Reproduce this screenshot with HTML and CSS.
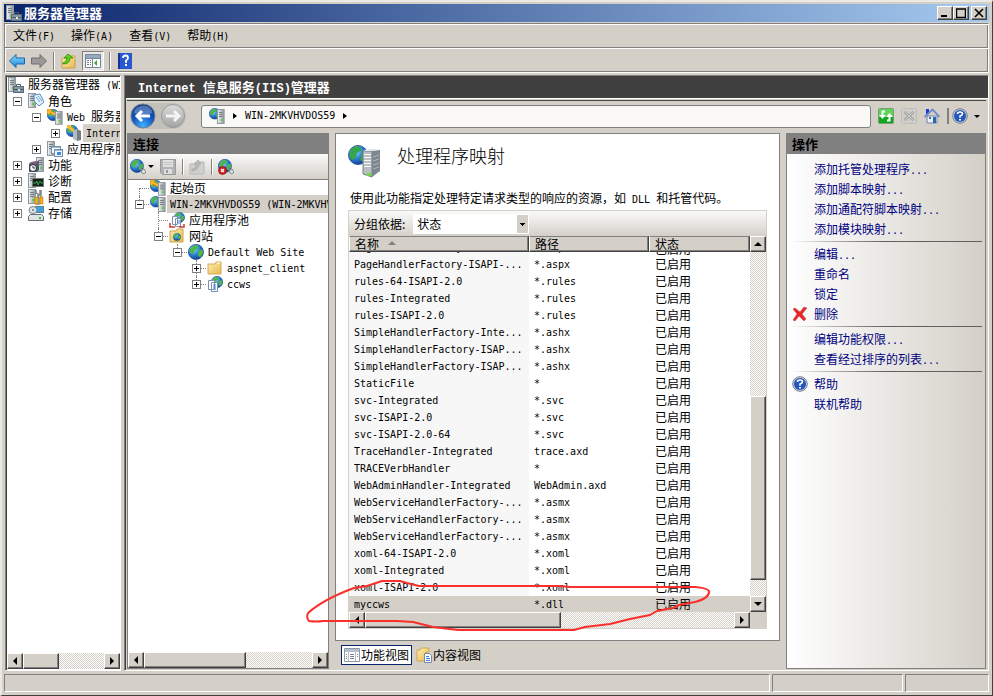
FILE: index.html
```html
<!DOCTYPE html>
<html lang="zh-CN">
<head>
<meta charset="utf-8">
<title>服务器管理器</title>
<link rel="stylesheet" href="styles.css">
</head>
<body>
<svg class="defs" aria-hidden="true">
<defs>
<linearGradient id="gTower" x1="0" x2="1"><stop offset="0" stop-color="#f4f6f7"/><stop offset="1" stop-color="#8d979d"/></linearGradient>
<radialGradient id="gGlobe" cx=".35" cy=".3" r=".8"><stop offset="0" stop-color="#a8dcff"/><stop offset=".5" stop-color="#2b7fd6"/><stop offset="1" stop-color="#0b2f86"/></radialGradient>
<linearGradient id="gFolder" x1="0" y1="0" x2="1" y2="1"><stop offset="0" stop-color="#fff0b4"/><stop offset="1" stop-color="#e6b84c"/></linearGradient>
<radialGradient id="gBlue" cx=".5" cy=".9" r=".9"><stop offset="0" stop-color="#3fb2ff"/><stop offset=".5" stop-color="#1559c4"/><stop offset="1" stop-color="#08307f"/></radialGradient>
<linearGradient id="gGray" x1="0" y1="0" x2="0" y2="1"><stop offset="0" stop-color="#dadada"/><stop offset="1" stop-color="#a4a4a4"/></linearGradient>
<linearGradient id="gArrow" x1="0" y1="0" x2="0" y2="1"><stop offset="0" stop-color="#8fdcff"/><stop offset="1" stop-color="#1b86d8"/></linearGradient>
<g id="tower"><rect x=".5" y=".5" width="7" height="14" fill="url(#gTower)" stroke="#8e989d"/><path d="M2 3.5h4M2 5.5h4M2 7.5h4" stroke="#727d83"/><rect x="4" y="10" width="2" height="2" fill="#4fd32e"/></g>
<g id="ball"><circle cx="6" cy="6" r="5.7" fill="url(#gGlobe)" stroke="#1d4f96" stroke-width=".6"/><path d="M2 3Q4 .6 7 1L8 3 5 5 4 8 2 7 1 5ZM8 5l3-1 .4 3-2 3-2-1Z" fill="#4cb648"/></g>
</defs>
<symbol id="server" viewBox="0 0 16 16"><use href="#tower"/><rect x="5.500" y="9.500" width="10" height="6" fill="#8297a5" stroke="#5c6b76"/><path d="M8.500 9V7.500h4V9M6 12.500h9" fill="none" stroke="#4a5963"/><path d="M10 12h2v2h-2z" fill="#e6e6e6"/></symbol>
<symbol id="role" viewBox="0 0 16 16"><use href="#tower"/><path d="M6 2l6-1 4 8-5 4-5-5Z" fill="#e3f1fc" stroke="#5b87b5"/><path d="M8 4l4 5M10 3l4 5" stroke="#6ea4da"/></symbol>
<symbol id="web" viewBox="0 0 16 16"><use href="#ball"/><path d="M0 4V0h5L4 2l5 2-1 3-5-3-1 2Z" fill="#ffb92e" stroke="#c97a0a" stroke-width=".6"/><g transform="translate(8 2) scale(.95 .92)"><use href="#tower"/></g></symbol>
<symbol id="globesrv" viewBox="0 0 16 16"><g transform="scale(.95)"><use href="#ball"/></g><g transform="translate(8 1) scale(.95 1)"><use href="#tower"/></g></symbol>
<symbol id="iis" viewBox="0 0 16 16"><use href="#ball"/><path d="M1 3V0h4v2l4 3-2 2-4-3Z" fill="#ffb92e"/><path d="M7 6l4-2v12l-4-2Z" fill="#b4bcc0"/><path d="M11 4l4 2v9l-4 1Z" fill="#727d84"/></symbol>
<symbol id="apps" viewBox="0 0 16 16"><use href="#tower"/><rect x="4.500" y="5.500" width="9" height="7" fill="#f2f7fc" stroke="#768ca3"/><rect x="7.500" y="8.500" width="8" height="7" fill="#eef6ff" stroke="#768ca3"/><path d="M5 6h8v1H5zM8 9h7v1H8z" fill="#9bbbe0"/><path d="M10 11h4v3h-4z" fill="#3b88de"/></symbol>
<symbol id="feature" viewBox="0 0 16 16"><g transform="translate(8 0)"><use href="#tower"/></g><path d="M3 5l8-1v9l-2 2H1V7Z" fill="#4c5a70"/><path d="M4 5l7-1-2 3H1Z" fill="#7b5a78"/><circle cx="5" cy="11" r="3.500" fill="#f4f4f4" stroke="#20272d"/><path d="M5 9v2h2" fill="none" stroke="#333"/></symbol>
<symbol id="diag" viewBox="0 0 16 16"><use href="#tower"/><rect x="4.500" y="5.500" width="11" height="8" fill="#14241a" stroke="#777"/><path d="M5 10h3l1-2 1 4 2-4 1 2h2" fill="none" stroke="#38a34f"/></symbol>
<symbol id="config" viewBox="0 0 16 16"><use href="#tower"/><path d="M8 1v3l2 1v3l2-3V1M13 1v7M9 9h2v6H8V9" fill="none" stroke="#7c878d" stroke-width="1.500"/><path d="M7 8h3v7H7zM12 8h3v7h-3z" fill="#f3b225" stroke="#bd7904" stroke-width=".6"/></symbol>
<symbol id="storage" viewBox="0 0 16 16"><rect x="7.500" y="1.500" width="8" height="6" fill="#3aa3e4" stroke="#657c8a"/><ellipse cx="5" cy="5" rx="4" ry="3.500" fill="#dce2e6" stroke="#7a858b"/><circle cx="5" cy="5" r="1" fill="#6c777d"/><path d="M.5 11.500l2-2h11l2 2v4H.5Z" fill="#e0e4e7" stroke="#626c73"/><path d="M11 12h2v2h-2z" fill="#39c12b"/></symbol>
<symbol id="pool" viewBox="0 0 16 16"><g transform="translate(5 0) scale(.9)"><use href="#ball"/></g><path d="M3.500 4.500h5v8h-5zM6.500 6.500h5v8h-5z" fill="#fff" stroke="#7e92ac"/><path d="M8 9h3M8 11h3" stroke="#5088cf"/><path d="M1 11v4h5M10 15h5v-3" fill="none" stroke="#cf382c" stroke-width="1.500"/></symbol>
<symbol id="sites" viewBox="0 0 16 16"><path d="M1 3h6l1-2h6v13H1Z" fill="url(#gFolder)" stroke="#d0a448"/><g transform="translate(4 5) scale(.65)"><use href="#ball"/></g></symbol>
<symbol id="globe" viewBox="0 0 16 16"><g transform="scale(1.320)"><use href="#ball"/></g></symbol>
<symbol id="folder" viewBox="0 0 16 16"><path d="M1 4h7l1-2h5v12H1Z" fill="url(#gFolder)" stroke="#d5aa52"/><path d="M10 3h3" stroke="#fff"/></symbol>
<symbol id="app" viewBox="0 0 16 16"><g transform="translate(4 0)"><use href="#ball"/></g><path d="M1.500 4.500h6v9h-6zM4.500 6.500h6v9h-6z" fill="#fff" stroke="#7c91ae"/><path d="M6 9h3M6 11h3M6 13h3" stroke="#4687d4"/></symbol>
<symbol id="connect" viewBox="0 0 16 16"><g transform="scale(1.150)"><use href="#ball"/></g><path d="M9 8l3 3 2-1 2 3-2 2-3-2 1-2-3-2" fill="#dce2e6" stroke="#7b878f"/></symbol>
<symbol id="disconnect" viewBox="0 0 16 16"><use href="#connect"/><circle cx="4.500" cy="11.500" r="4" fill="#d41c1c" stroke="#8e0d0d" stroke-width=".6"/><path d="M3 10l3 3M6 10l-3 3" stroke="#fff" stroke-width="1.300"/></symbol>
<symbol id="save" viewBox="0 0 16 16"><path d="M.5 .5h15v15H2.500l-2-2Z" fill="#b3b3b3" stroke="#999"/><path d="M3 1h10v7H3z" fill="#e1e1e1"/><path d="M4 10h8v5H4z" fill="#ddd"/><path d="M6 11h2v3H6z" fill="#999"/><path d="M4 3.500h8M4 5.500h8" stroke="#c5c5c5"/></symbol>
<symbol id="uplevelgray" viewBox="0 0 16 16"><path d="M1 5h7l1-2h6v12H1Z" fill="#d0d0ce" stroke="#b7b7b7"/><path d="M3 10q4 0 4-5H5l4-4 3 4h-2q0 6-7 7Z" fill="#b9b9b9" stroke="#a2a2a2" stroke-width=".6"/></symbol>
<symbol id="uplevel" viewBox="0 0 16 16"><path d="M1 5h7l1-2h5v12H1Z" fill="url(#gFolder)" stroke="#c9a04a"/><path d="M2 10q4-1 4-5H3l4-4 5 4H9q0 6-7 6Z" fill="#5bd31d" stroke="#278a06" stroke-width=".8"/></symbol>
<symbol id="arrow" viewBox="0 0 16 16"><path d="M.5 8L7 1.500V5h8.500v6H7v3.500Z" fill="url(#gArrow)" stroke="#1767ad"/></symbol>
<symbol id="arrowgray" viewBox="0 0 16 16"><path d="M15.500 8L9 1.500V5H.5v6H9v3.500Z" fill="#999" stroke="#6e6e6e"/></symbol>
<symbol id="panel" viewBox="0 0 16 16"><path d="M.5 1.500h15v13H.5z" fill="#fff" stroke="#788599"/><path d="M1 2h14v3H1z" fill="#96a8c2"/><path d="M1 5.500h14M7.500 5v9" stroke="#788599"/><path d="M2 7.500h2M5 7.500h1M2 9.500h2M5 9.500h1M2 11.500h2M5 11.500h1" stroke="#777"/><path d="M12 7v6L9 10Z" fill="#39a927"/></symbol>
<symbol id="helpbook" viewBox="0 0 14 16"><path d="M0 0h14v16H0z" fill="#2957cf"/><path d="M0 0h2v16H0z" fill="#14348f"/><path d="M5 5q0-2.500 2.500-2.500T10 5q0 1.500-2 2.500v2.500M7 12h2" fill="none" stroke="#fff" stroke-width="1.800"/></symbol>
<symbol id="help" viewBox="0 0 16 16"><circle cx="8" cy="8" r="7.300" fill="#c8ccd2" stroke="#7d838b"/><circle cx="8" cy="8" r="6" fill="#2457bd"/><path d="M5.500 6Q5.500 4 8 4t2.500 2Q10.500 7 8 8v1.800M7 11.800h2" fill="none" stroke="#fff" stroke-width="1.600"/></symbol>
<symbol id="refresh" viewBox="0 0 16 16"><rect x=".5" y=".5" width="15" height="15" rx="1" fill="#5fd45a" stroke="#7a997a"/><path d="M1 9h14v6H1z" fill="#0fa71c"/><path d="M7 3.500H4.500V8M4.500 6v3M9 12.500h2.500V8" fill="none" stroke="#fff" stroke-width="2"/><path d="M1 7h7l-3.500 4ZM8 9h7l-3.500-4Z" fill="#fff"/></symbol>
<symbol id="stop" viewBox="0 0 16 16"><rect x=".5" y=".5" width="15" height="15" rx="1" fill="#cecdc9" stroke="#bdbdba"/><path d="M3.500 4l9 8M12.500 4l-9 8" stroke="#a4a4a4" stroke-width="2.500"/><path d="M4 4l8 8M12 4l-8 8" stroke="#ddd" stroke-width=".7"/></symbol>
<symbol id="home" viewBox="0 0 16 16"><path d="M3 8h10v7H3z" fill="#e9eef9" stroke="#7084aa"/><path d="M2 1h3v4L2 7Z" fill="#203bce"/><path d="M.5 9L8.500 1.500l7 7.500" fill="none" stroke="#6b86cf" stroke-width="1.800"/><path d="M9 9h3v6H9z" fill="#2968a5"/><path d="M5 9h2v2H5z" fill="#4b6796"/></symbol>
<symbol id="delete" viewBox="0 0 16 16"><path d="M1 3l2-1 5 4 4-5 3 1-5 6 4 5-2 2-5-5-4 5-2-1 4-6Z" fill="#ec2424" stroke="#b95a5a" stroke-width=".6"/></symbol>
<symbol id="features" viewBox="0 0 16 16"><path d="M.5 1.500h15v13H.5z" fill="#fff" stroke="#8d97a5"/><path d="M1 2h14v3H1z" fill="#b4bfce"/><path d="M4.500 5v9M11.500 5v9" stroke="#b2b9c3"/><path d="M2 7.500h1M2 9.500h1M2 11.500h1M6 7.500h4M6 9.500h4M6 11.500h4M13 7.500h1M13 9.500h1" stroke="#7b8492"/></symbol>
<symbol id="content" viewBox="0 0 16 16"><path d="M1 3h3l1-2h8v4h-3v9H1Z" fill="url(#gFolder)" stroke="#d0a650"/><path d="M8.500 6.500h5l2 2v7h-7z" fill="#fff" stroke="#7688a5"/><path d="M10 9.500h3M10 11.500h4M10 13.500h4" stroke="#3e7fd1"/></symbol>
<symbol id="feature-large" viewBox="0 0 34 34"><circle cx="10" cy="10" r="9.500" fill="url(#gGlobe)" stroke="#345a9d"/><path d="M3 4q4-4 9-2l2 3-5 3-1 5-4 2-3-4ZM14 8l5-1v5l-4 5-3-2Z" fill="#35a64b"/><path d="M15 6h9v26l-9-3Z" fill="#b8c0c4" stroke="#778187"/><path d="M24 6l8-1v21l-8 6Z" fill="#7d878d"/><path d="M15 6l5-2h12l-8 2Z" fill="#e4e8ea"/><path d="M16 9.500h7M16 12.500h7M16 15.500h7M16 18.500h7M16 21.500h7" stroke="#f8f8f8"/><path d="M25 12l6-2M25 16l6-2M25 20l6-2M25 24l6-2" stroke="#aeb5b9"/><path d="M19 28h4v3h-4z" fill="#70dc37"/></symbol>
<symbol id="nav-back" viewBox="0 0 26 26"><circle cx="13" cy="13" r="12" fill="url(#gBlue)" stroke="#747f95"/><path d="M3.500 10Q5 3 13 2.500t9.500 7.500Q13 14 3.500 10Z" fill="#fff" opacity=".28"/><path d="M20 13H7M12 8l-5 5 5 5" fill="none" stroke="#fff" stroke-width="3"/></symbol>
<symbol id="nav-forward" viewBox="0 0 26 26"><circle cx="13" cy="13" r="11.500" fill="url(#gGray)" stroke="#999"/><path d="M6 13h13M14 8l5 5-5 5" fill="none" stroke="#f4f4f4" stroke-width="3"/></symbol>
</svg>

<div class="window">
  <header class="titlebar">
    <svg class="icon"><use href="#server"/></svg>
    <h1>服务器管理器</h1>
    <div class="captions">
      <button class="cap" aria-label="最小化"><svg viewBox="0 0 10 10"><path d="M1 8h6" stroke="#000" stroke-width="2"/></svg></button><button class="cap" aria-label="最大化"><svg viewBox="0 0 10 10"><path d="M.5 1v8.500h9V1M0 1h10" fill="none" stroke="#000" stroke-width="1.500"/></svg></button><button class="cap close" aria-label="关闭"><svg viewBox="0 0 10 10"><path d="M1 1l8 8M9 1L1 9" stroke="#000" stroke-width="1.600"/></svg></button>
    </div>
  </header>

  <div class="rebar">
    <nav class="menu">
      <button>文件<span class="en">(F)</span></button><button>操作<span class="en">(A)</span></button><button>查看<span class="en">(V)</span></button><button>帮助<span class="en">(H)</span></button>
    </nav>
    <div class="tools">
      <button aria-label="后退"><svg class="icon"><use href="#arrow"/></svg></button>
      <button aria-label="前进"><svg class="icon"><use href="#arrowgray"/></svg></button>
      <i class="rule"></i>
      <button aria-label="上一级"><svg class="icon"><use href="#uplevel"/></svg></button>
      <button class="pressed" aria-label="显示控制台树"><svg class="icon"><use href="#panel"/></svg></button>
      <i class="rule"></i>
      <button aria-label="帮助"><svg class="icon"><use href="#helpbook"/></svg></button>
    </div>
  </div>

  <div class="workspace">
    <aside class="console">
      <ul class="tree">
        <li><svg class="icon"><use href="#server"/></svg><span>服务器管理器<b class="en"> (WIN</b></span></li>
        <li><button class="twig" aria-label="折叠"><i class="box minus"></i></button><svg class="icon"><use href="#role"/></svg><span>角色</span></li>
        <li class="l1"><button class="twig" aria-label="折叠"><i class="box minus"></i></button><svg class="icon"><use href="#web"/></svg><span><b class="en">Web </b>服务器</span></li>
        <li class="l2"><button class="twig" aria-label="展开"><i class="box plus"></i></button><svg class="icon"><use href="#iis"/></svg><span class="selected"><b class="en">Internet</b></span></li>
        <li class="l1"><button class="twig" aria-label="展开"><i class="box plus"></i></button><svg class="icon"><use href="#apps"/></svg><span>应用程序服务器</span></li>
        <li><button class="twig" aria-label="展开"><i class="box plus"></i></button><svg class="icon"><use href="#feature"/></svg><span>功能</span></li>
        <li><button class="twig" aria-label="展开"><i class="box plus"></i></button><svg class="icon"><use href="#diag"/></svg><span>诊断</span></li>
        <li><button class="twig" aria-label="展开"><i class="box plus"></i></button><svg class="icon"><use href="#config"/></svg><span>配置</span></li>
        <li><button class="twig" aria-label="展开"><i class="box plus"></i></button><svg class="icon"><use href="#storage"/></svg><span>存储</span></li>
      </ul>
      <div class="hscroll"><button class="sb left" aria-label="向左"></button><div class="track"><div class="thumb third"></div></div><button class="sb right" aria-label="向右"></button></div>
    </aside>

    <main class="iis">
      <h2 class="iis-title"><span class="en">Internet </span>信息服务<span class="en">(IIS)</span>管理器</h2>
      <div class="navrow">
        <div class="navbuttons"><button aria-label="后退"><svg><use href="#nav-back"/></svg></button><button aria-label="前进"><svg><use href="#nav-forward"/></svg></button></div>
        <div class="address"><svg class="icon"><use href="#globesrv"/></svg><i class="chevron"></i><a href="#" class="en">WIN-2MKVHVDOS59</a><i class="chevron"></i></div>
        <div class="navicons">
          <button aria-label="刷新"><svg class="icon"><use href="#refresh"/></svg></button>
          <button aria-label="停止"><svg class="icon"><use href="#stop"/></svg></button>
          <button aria-label="主页"><svg class="icon"><use href="#home"/></svg></button>
        </div>
        <button class="helpmenu" aria-label="帮助"><svg class="icon"><use href="#help"/></svg><i class="drop"></i></button>
      </div>

      <div class="panes">
        <section class="connections">
          <h3 class="pane-title">连接</h3>
          <div class="conn-tools">
            <button aria-label="连接"><svg class="icon"><use href="#connect"/></svg><i class="drop"></i></button>
            <button aria-label="保存"><svg class="icon"><use href="#save"/></svg></button>
            <i class="rule"></i>
            <button aria-label="向上"><svg class="icon"><use href="#uplevelgray"/></svg></button>
            <i class="rule"></i>
            <button aria-label="断开"><svg class="icon"><use href="#disconnect"/></svg></button>
          </div>
          <ul class="tree dotted">
            <li><span class="twig right down"></span><svg class="icon"><use href="#web"/></svg><span>起始页</span></li>
            <li><button class="twig right up" aria-label="折叠"><i class="box minus"></i></button><svg class="icon"><use href="#globesrv"/></svg><span class="selected"><b class="en">WIN-2MKVHVDOS59 (WIN-2MKVHVDOS59\Administrator)</b></span></li>
            <li class="l1"><span class="twig right up down"></span><svg class="icon"><use href="#pool"/></svg><span>应用程序池</span></li>
            <li class="l1"><button class="twig right up" aria-label="折叠"><i class="box minus"></i></button><svg class="icon"><use href="#sites"/></svg><span>网站</span></li>
            <li class="l2"><button class="twig right up" aria-label="折叠"><i class="box minus"></i></button><svg class="icon"><use href="#globe"/></svg><span><b class="en">Default Web Site</b></span></li>
            <li class="l3"><button class="twig right up down" aria-label="展开"><i class="box plus"></i></button><svg class="icon"><use href="#folder"/></svg><span><b class="en">aspnet_client</b></span></li>
            <li class="l3"><button class="twig right up" aria-label="展开"><i class="box plus"></i></button><svg class="icon"><use href="#app"/></svg><span><b class="en">ccws</b></span></li>
          </ul>
          <div class="hscroll"><button class="sb left" aria-label="向左"></button><div class="track"><div class="thumb most"></div></div><button class="sb right" aria-label="向右"></button></div>
        </section>

        <section class="center">
          <article class="page">
            <header class="page-head"><svg><use href="#feature-large"/></svg><h2>处理程序映射</h2></header>
            <p class="intro">使用此功能指定处理特定请求类型的响应的资源，如<span class="en"> DLL </span>和托管代码。</p>
            <div class="listing">
              <div class="group"><label for="group">分组依据:</label><select id="group"><option>状态</option></select></div>
              <div class="list-body">
                <div class="rows">
                <table>
                  <colgroup><col class="c-name"><col class="c-path"><col></colgroup>
                  <thead><tr><th>名称<i class="sort"></i></th><th>路径</th><th>状态</th></tr></thead>
                  <tbody>
                    <tr class="clipped"><td><div>PageHandlerFactory-Inte...</div></td><td><div>*.aspx</div></td><td><div>已启用</div></td></tr>
                    <tr><td>PageHandlerFactory-ISAPI-...</td><td>*.aspx</td><td>已启用</td></tr>
                    <tr><td>rules-64-ISAPI-2.0</td><td>*.rules</td><td>已启用</td></tr>
                    <tr><td>rules-Integrated</td><td>*.rules</td><td>已启用</td></tr>
                    <tr><td>rules-ISAPI-2.0</td><td>*.rules</td><td>已启用</td></tr>
                    <tr><td>SimpleHandlerFactory-Inte...</td><td>*.ashx</td><td>已启用</td></tr>
                    <tr><td>SimpleHandlerFactory-ISAP...</td><td>*.ashx</td><td>已启用</td></tr>
                    <tr><td>SimpleHandlerFactory-ISAP...</td><td>*.ashx</td><td>已启用</td></tr>
                    <tr><td>StaticFile</td><td>*</td><td>已启用</td></tr>
                    <tr><td>svc-Integrated</td><td>*.svc</td><td>已启用</td></tr>
                    <tr><td>svc-ISAPI-2.0</td><td>*.svc</td><td>已启用</td></tr>
                    <tr><td>svc-ISAPI-2.0-64</td><td>*.svc</td><td>已启用</td></tr>
                    <tr><td>TraceHandler-Integrated</td><td>trace.axd</td><td>已启用</td></tr>
                    <tr><td>TRACEVerbHandler</td><td>*</td><td>已启用</td></tr>
                    <tr><td>WebAdminHandler-Integrated</td><td>WebAdmin.axd</td><td>已启用</td></tr>
                    <tr><td>WebServiceHandlerFactory-...</td><td>*.asmx</td><td>已启用</td></tr>
                    <tr><td>WebServiceHandlerFactory-...</td><td>*.asmx</td><td>已启用</td></tr>
                    <tr><td>WebServiceHandlerFactory-...</td><td>*.asmx</td><td>已启用</td></tr>
                    <tr><td>xoml-64-ISAPI-2.0</td><td>*.xoml</td><td>已启用</td></tr>
                    <tr><td>xoml-Integrated</td><td>*.xoml</td><td>已启用</td></tr>
                    <tr><td>xoml-ISAPI-2.0</td><td>*.xoml</td><td>已启用</td></tr>
                    <tr class="current"><td>myccws</td><td>*.dll</td><td>已启用</td></tr>
                  </tbody>
                </table>
                </div>
                <div class="vscroll"><button class="sb up" aria-label="向上"></button><div class="track"><div class="thumb"></div></div><button class="sb down" aria-label="向下"></button></div>
              </div>
              <div class="hscroll"><button class="sb left" aria-label="向左"></button><div class="track"><div class="thumb half"></div></div><button class="sb right" aria-label="向右"></button></div>
            </div>
            <svg class="mark" viewBox="0 0 408 52" aria-hidden="true"><path d="M49 8C30 15 12 25 3 33Q1 38 4 41Q12 42 18 41H92L108 42 128 47 153 50H269L280 47 305 44 325 39 345 35 352 31 368 28 374 25 390 22Q405 18 404 11Q402 8 390 7H265L255 6H114L102 3 95 1H77L62 6Z" fill="none" stroke="#fa2f2b" stroke-width="2" stroke-linejoin="round"/></svg>
          </article>
          <div class="views"><button class="on"><svg class="icon"><use href="#features"/></svg>功能视图</button><button><svg class="icon"><use href="#content"/></svg>内容视图</button></div>
        </section>

        <aside class="actions">
          <h3 class="pane-title">操作</h3>
          <div class="links">
            <a href="#">添加托管处理程序<span class="en">...</span></a>
            <a href="#">添加脚本映射<span class="en">...</span></a>
            <a href="#">添加通配符脚本映射<span class="en">...</span></a>
            <a href="#">添加模块映射<span class="en">...</span></a>
            <hr>
            <a href="#">编辑<span class="en">...</span></a>
            <a href="#">重命名</a>
            <a href="#">锁定</a>
            <a href="#" class="with-icon"><svg class="icon"><use href="#delete"/></svg>删除</a>
            <hr>
            <a href="#">编辑功能权限<span class="en">...</span></a>
            <a href="#">查看经过排序的列表<span class="en">...</span></a>
            <hr>
            <a href="#" class="with-icon"><svg class="icon"><use href="#help"/></svg>帮助</a>
            <a href="#">联机帮助</a>
          </div>
        </aside>
      </div>
    </main>
  </div>
  <footer class="status"><div></div><div></div><div></div></footer>
</div>
</body>
</html>
```
FILE: styles.css
```css
* { box-sizing: border-box; }
body {
  margin: 0;
  color: #000;
  font: 12px/16px "Noto Sans CJK SC", sans-serif;
}
h1, h2, h3, p, ul { margin: 0; padding: 0; }
button { margin: 0; padding: 0; border: 0; background: none; font: inherit; color: inherit; }
a { color: inherit; text-decoration: none; }
.defs { position: absolute; width: 0; height: 0; }
.icon { width: 16px; height: 16px; flex: none; display: block; }
.en { font-family: "DejaVu Sans Mono", monospace; font-size: 10px; font-weight: 400; white-space: pre; }

.window {
  display: flex;
  flex-direction: column;
  height: 100vh;
  min-height: 640px;
  padding: 2px 3px 3px 2px;
  overflow: hidden;
  background: #d4d0c8;
  border: 2px solid;
  border-width: 2px 1px 1px 2px;
  border-color: #ebe9e4 #404040 #404040 #ebe9e4;
}
.titlebar {
  display: flex;
  align-items: center;
  gap: 2px;
  flex: none;
  height: 18px;
  padding: 0 2px;
  background: linear-gradient(90deg, #0a246a, #a6caf0);
}
.titlebar h1 { flex: 1; color: #fff; font-size: 13px; line-height: 18px; font-weight: 700; }
.captions { display: flex; }
.cap, .sb, .thumb {
  background: #d4d0c8;
  border: 1px solid;
  border-color: #fff #404040 #404040 #fff;
  box-shadow: inset -1px -1px #808080;
}
.cap { width: 16px; height: 14px; display: grid; place-items: center; }
.cap svg { width: 10px; height: 10px; }
.close { margin-left: 2px; }

.rebar { flex: none; margin-top: 1px; border: 1px solid; border-color: #808080 #fff #fff #808080; box-shadow: inset 1px 1px #fff, inset -1px -1px #808080; }
.menu { display: flex; height: 24px; border-bottom: 1px solid #808080; }
.menu button { padding: 0 8px; }
.tools { display: flex; align-items: center; height: 24px; padding-left: 3px; border-top: 1px solid #fff; gap: 4px; }
.tools button { width: 18px; height: 20px; display: grid; place-items: center; }
.rule { width: 2px; height: 18px; margin: 0 1px; background: #808080; border-right: 1px solid #fff; flex: none; }
.tools .pressed { width: 22px; border: 1px solid; border-color: #808080 #fff #fff #808080; background: #eae8e4; }

.workspace { display: flex; flex: 1; min-height: 0; gap: 3px; padding: 2px 0 0 1px; }
.console {
  display: flex;
  flex-direction: column;
  flex: none;
  width: 116px;
  background: #fff;
  border: 1px solid;
  border-color: #808080 #fff #fff #808080;
  box-shadow: inset 1px 1px #404040;
  padding: 1px 0 1px 1px;
}
.tree { flex: 1; min-height: 0; overflow: hidden; list-style: none; }
.tree li { display: flex; align-items: center; height: 16px; padding-left: 1px; white-space: nowrap; }
.tree li > span:last-child { padding-left: 3px; margin-left: 1px; line-height: 16px; }
.tree .l1 { padding-left: 20px; }
.tree .l2 { padding-left: 39px; }
.tree .l3 { padding-left: 58px; }
.tree .selected { flex: 1; background: #d4d0c8; overflow: hidden; }
.twig { position: relative; width: 19px; height: 16px; flex: none; display: grid; place-items: center; margin-right: 1px; }
.box {
  width: 9px;
  height: 9px;
  border: 1px solid #808080;
  background: linear-gradient(#000, #000) center / 5px 1px no-repeat #fff;
  z-index: 1;
}
.box.plus { background: linear-gradient(#000, #000) center / 5px 1px no-repeat, linear-gradient(#000, #000) center / 1px 5px no-repeat #fff; }
.dotted .right::before { content: ""; position: absolute; left: 10px; right: 0; top: 8px; border-top: 1px dotted #808080; }
.dotted .up::after, .dotted .down::after { content: ""; position: absolute; left: 9px; top: 0; height: 8px; border-left: 1px dotted #808080; }
.dotted .down::after { top: 8px; }
.dotted .up.down::after { top: 0; height: 16px; }
.dotted { padding-left: 1px; }

.hscroll { display: flex; flex: none; height: 16px; }
.vscroll { display: flex; flex-direction: column; flex: none; width: 16px; }
.sb { width: 16px; height: 16px; flex: none; display: grid; place-items: center; }
.sb::before { content: ""; border: 4px solid transparent; }
.sb.left::before { border-left: 0; border-right-color: #000; }
.sb.right::before { border-right: 0; border-left-color: #000; }
.sb.up::before { border-top: 0; border-bottom-color: #000; }
.sb.down::before { border-bottom: 0; border-top-color: #000; }
.track { flex: 1; background: repeating-conic-gradient(#fff 0 25%, #d4d0c8 0 50%) 0 0 / 2px 2px; }
.hscroll .thumb { height: 16px; }
.third { width: 44%; }
.most { width: 61%; }
.half { width: 53%; }

.iis {
  display: flex;
  flex-direction: column;
  flex: 1;
  min-width: 0;
  border: 1px solid;
  border-color: #808080 #fff #fff #808080;
  box-shadow: inset 1px 1px #404040;
  padding: 1px 2px;
}
.iis-title { flex: none; height: 22px; margin: 0 -2px 0 -1px; padding-left: 12px; background: #404040; color: #fff; border-bottom: 1px solid #fff; font-size: 13px; line-height: 20px; font-weight: 700; }
.iis-title .en { font-family: "Liberation Mono", monospace; font-size: 12px; font-weight: 700; }
.navrow { display: flex; align-items: center; flex: none; height: 33px; margin-top: 1px; border-top: 1px solid #3c4a40; padding: 0 6px 2px 3px; }
.navbuttons { display: flex; gap: 4px; margin-right: 15px; background: #c3c0ba; border-radius: 14px; }
.navbuttons button, .navbuttons svg { display: block; width: 26px; height: 26px; }
.address { display: flex; align-items: center; flex: 1; height: 23px; padding-left: 7px; background: #faf9f7; border: 1px solid #808080; border-radius: 3px; }
.chevron { margin: 0 8px; border: 3px solid transparent; border-left: 4px solid #000; border-right: 0; }
.navicons { display: flex; gap: 7px; padding: 0 7px; border-right: 2px solid #808080; }
.navicons, .helpmenu { height: 16px; }
.helpmenu { display: flex; align-items: center; gap: 6px; padding-left: 3px; }
.drop { border: 3px solid transparent; border-top-color: #000; border-bottom: 0; }

.panes { display: flex; flex: 1; min-height: 0; gap: 6px; }
.pane-title { flex: none; height: 21px; padding-left: 5px; background: #808080; font-size: 13px; line-height: 21px; font-weight: 700; }
.connections { display: flex; flex-direction: column; flex: none; width: 202px; background: #fff; border: 1px solid #808080; border-top: 0; }
.conn-tools { display: flex; align-items: center; flex: none; height: 26px; padding-left: 2px; border-bottom: 1px solid #808080; background: linear-gradient(#fafaf9, #d4d0c8); }
.conn-tools button { display: flex; align-items: center; gap: 2px; margin-right: 6px; }
.conn-tools .rule { margin: 0 5px 0 0; height: 16px; }

.center { display: flex; flex-direction: column; flex: 1; min-width: 0; }
.page { position: relative; display: flex; flex-direction: column; flex: 1; min-height: 0; padding: 11px 12px; background: #fff; border: 1px solid #808080; }
.page-head { display: flex; flex: none; gap: 15px; }
.page-head svg { width: 34px; height: 34px; }
.page-head h2 { font-size: 18px; line-height: 20px; font-weight: 300; }
.intro { flex: none; margin: 11px 0 2px; padding-left: 2px; white-space: nowrap; }
.listing { display: flex; flex-direction: column; flex: 1; min-height: 0; border: 1px solid #d4d0c8; }
.group { display: flex; align-items: center; flex: none; height: 25px; padding-left: 5px; gap: 8px; background: linear-gradient(#fafaf9, #d4d0c8); }
.group select {
  width: 116px;
  height: 20px;
  padding: 0 0 0 3px;
  border: 1px solid #fff;
  border-radius: 0;
  appearance: none;
  color: #000;
  font: inherit;
  background: linear-gradient(#000, #000) right 3px top 8px / 5px 1px no-repeat, linear-gradient(#000, #000) right 4px top 9px / 3px 1px no-repeat, linear-gradient(#000, #000) right 5px top 10px / 1px 1px no-repeat, linear-gradient(#d4d0c8, #d4d0c8) right / 11px 100% no-repeat, #fff;
}
.list-body { display: flex; flex: 1; min-height: 0; }
.rows { flex: 1; min-width: 0; overflow: hidden; }
table { width: 100%; border-collapse: separate; border-spacing: 0; table-layout: fixed; }
.c-name { width: 180px; }
.c-path { width: 120px; }
th { height: 16px; padding: 0 0 0 5px; overflow: hidden; background: #d4d0c8; border: 1px solid; border-color: #808080 #404040 #404040 #fff; box-shadow: inset -1px -1px #808080; text-align: left; font-weight: 400; line-height: 14px; }
.sort { display: inline-block; margin: 0 0 4px 9px; border: 4px solid transparent; border-top: 0; border-bottom-color: #808080; }
td { height: 17px; padding: 0 0 0 5px; font: 10px/17px "DejaVu Sans Mono", monospace; white-space: nowrap; }
td:first-child { background: #f7f7f7; }
td:last-child { padding: 0 0 2px 6px; font: 12px/15px "Noto Sans CJK SC", sans-serif; }
.clipped td, .clipped td:last-child { height: 4px; padding-bottom: 0; }
.clipped div { display: flex; align-items: flex-end; height: 4px; overflow: hidden; }
.current td, .current td:first-child { background: #d4d0c8; }
.vscroll .track { display: flex; align-items: flex-end; padding-bottom: 16px; }
.vscroll .thumb { width: 16px; height: 56%; }
.listing > .hscroll { padding-right: 16px; background: #d4d0c8; }
.mark { position: absolute; left: -31px; bottom: 8px; width: 408px; height: 52px; overflow: visible; pointer-events: none; z-index: 2; }
.views { display: flex; flex: none; height: 28px; padding: 4px 0 4px 6px; gap: 2px; }
.views button { display: flex; align-items: center; gap: 1px; height: 20px; padding: 0 2px; line-height: 18px; }
.views .on { background: #fff; border: 1px solid #0a246a; }

.actions { display: flex; flex-direction: column; flex: none; width: 200px; border: 1px solid #808080; border-top: 0; background: linear-gradient(90deg, #fff, #d4d0c8); }
.links { padding-top: 5px; }
.links a { display: block; height: 20px; padding-left: 27px; line-height: 20px; color: #000080; }
.links .with-icon { display: flex; align-items: center; gap: 6px; padding-left: 5px; }
.links hr { height: 1px; margin: 2px 3px; border: 0; background: linear-gradient(90deg, transparent, #606060 50%); }

.status { display: flex; flex: none; gap: 2px; height: 18px; margin-top: 3px; }
.status div { border: 1px solid; border-color: #808080 #fff #fff #808080; flex: 1; }
.status div:nth-child(2) { flex: none; width: 131px; }
.status div:nth-child(3) { flex: none; width: 84px; }
```
